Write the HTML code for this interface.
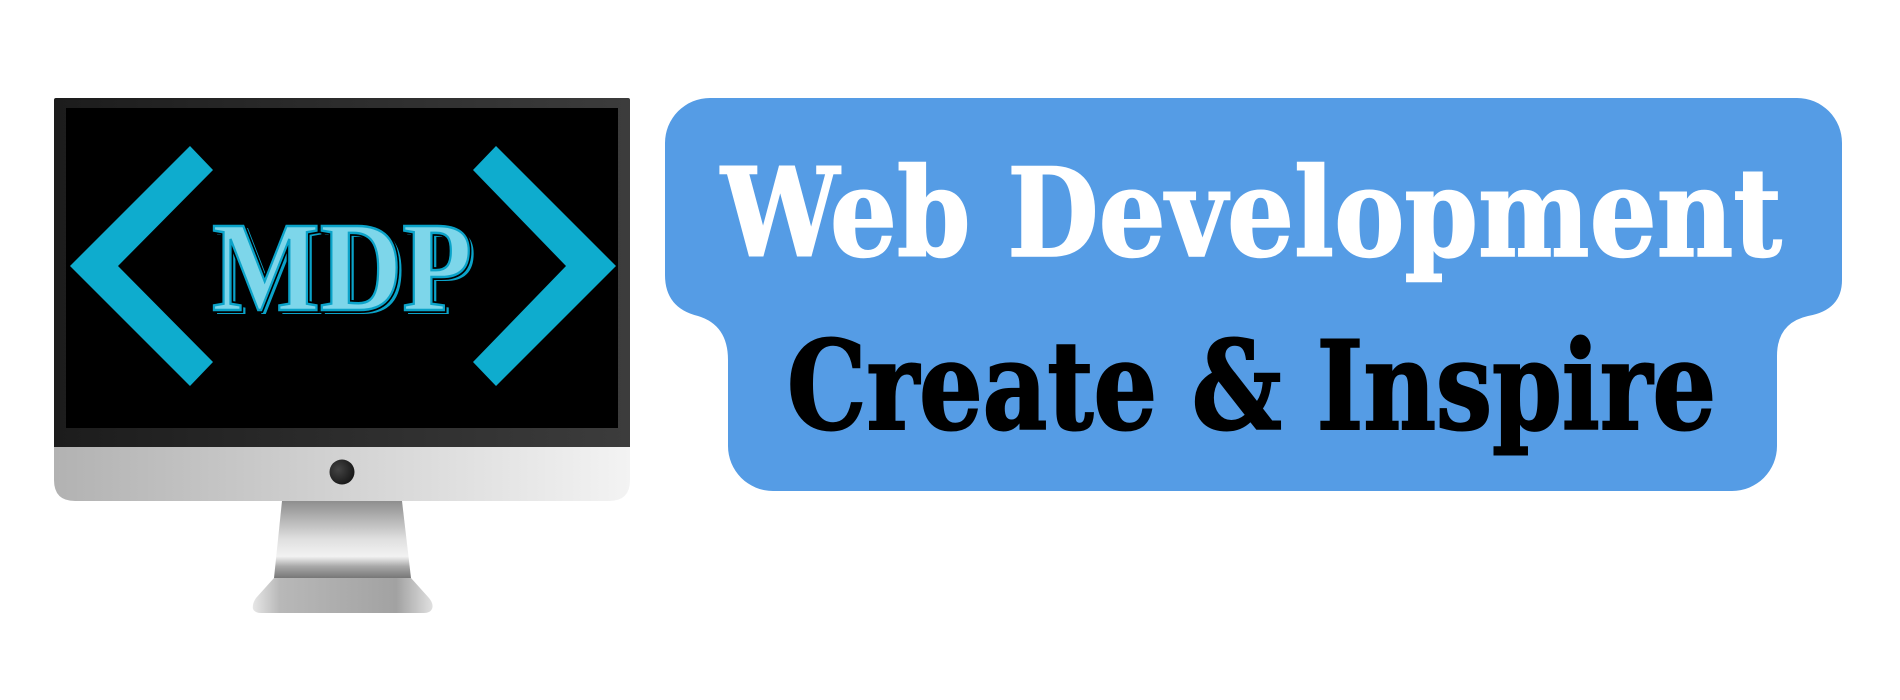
<!DOCTYPE html>
<html><head><meta charset="utf-8"><style>
html,body{margin:0;padding:0;background:#fff;width:1900px;height:700px;overflow:hidden}
svg{display:block}
</style></head><body>
<svg width="1900" height="700" viewBox="0 0 1900 700" xmlns="http://www.w3.org/2000/svg">
<defs>
<linearGradient id="bez" x1="0" x2="1"><stop offset="0" stop-color="#1c1c1c"/><stop offset="1" stop-color="#3c3c3c"/></linearGradient>
<linearGradient id="chin" x1="0" x2="1"><stop offset="0" stop-color="#b2b2b2"/><stop offset="1" stop-color="#f3f3f3"/></linearGradient>
<linearGradient id="stand" x1="0" y1="0" x2="0" y2="1"><stop offset="0" stop-color="#8e8e8e"/><stop offset="0.5" stop-color="#e0e0e0"/><stop offset="0.72" stop-color="#f2f2f2"/><stop offset="0.85" stop-color="#a8a8a8"/><stop offset="1" stop-color="#777"/></linearGradient>
<linearGradient id="base" x1="0" x2="1"><stop offset="0" stop-color="#e6e6e6"/><stop offset="0.15" stop-color="#b8b8b8"/><stop offset="0.8" stop-color="#a2a2a2"/><stop offset="1" stop-color="#e0e0e0"/></linearGradient>
<radialGradient id="cam" cx="0.35" cy="0.4" r="0.7"><stop offset="0" stop-color="#444"/><stop offset="1" stop-color="#151515"/></radialGradient>
</defs>
<!-- monitor -->
<path d="M54,100 Q54,98 56,98 H628 Q630,98 630,100 V447 H54 Z" fill="url(#bez)"/>
<rect x="66" y="108" width="552" height="320" fill="#000"/>
<path d="M54,447 H630 V480 Q630,501 609,501 H75 Q54,501 54,480 Z" fill="url(#chin)"/>
<circle cx="342" cy="472" r="12.5" fill="url(#cam)"/>
<path d="M282,501 H402 L411,578 H274 Z" fill="url(#stand)"/>
<path d="M274,578 H411 L429,598 Q434,604 432,609 Q430,613 424,613 H261 Q255,613 253,609 Q252,604 256,598 Z" fill="url(#base)"/>
<!-- chevrons -->
<polygon points="70,266 190,146 213,170 118,266 213,362 190,386" fill="#0eacce"/>
<polygon points="616,266 496,146 473,170 566,266 473,362 496,386" fill="#0eacce"/>
<!-- MDP -->
<text x="216" y="313" font-family="Liberation Serif, serif" font-weight="bold" font-size="128" textLength="260" lengthAdjust="spacingAndGlyphs" fill="#0aa3c9" stroke="#0aa3c9" stroke-width="2">MDP</text>
<text x="212" y="310" font-family="Liberation Serif, serif" font-weight="bold" font-size="128" textLength="260" lengthAdjust="spacingAndGlyphs" fill="#7dd6ea" stroke="#000" stroke-width="6" paint-order="stroke">MDP</text>
<text x="212" y="310" font-family="Liberation Serif, serif" font-weight="bold" font-size="128" textLength="260" lengthAdjust="spacingAndGlyphs" fill="#7dd6ea" stroke="#0aa3c9" stroke-width="2.5">MDP</text>
<!-- blue box -->
<path d="M710,98 H1797 A45,45 0 0 1 1842,143 V280 Q1842,310 1808,316 Q1777,323 1777,356 V446 A45,45 0 0 1 1732,491 H773 A45,45 0 0 1 728,446 V360 Q728,325 698,316 Q665,308 665,275 V143 A45,45 0 0 1 710,98 Z" fill="#559ce5"/>
<text x="721" y="256" font-family="DejaVu Serif, serif" font-weight="bold" font-stretch="condensed" font-size="123" textLength="1061" lengthAdjust="spacingAndGlyphs" fill="#fff" stroke="#fff" stroke-width="1.5">Web Development</text>
<text x="787" y="429" font-family="DejaVu Serif, serif" font-weight="bold" font-stretch="condensed" font-size="123" textLength="929" lengthAdjust="spacingAndGlyphs" fill="#000" stroke="#000" stroke-width="2">Create &amp; Inspire</text>
</svg>
</body></html>
